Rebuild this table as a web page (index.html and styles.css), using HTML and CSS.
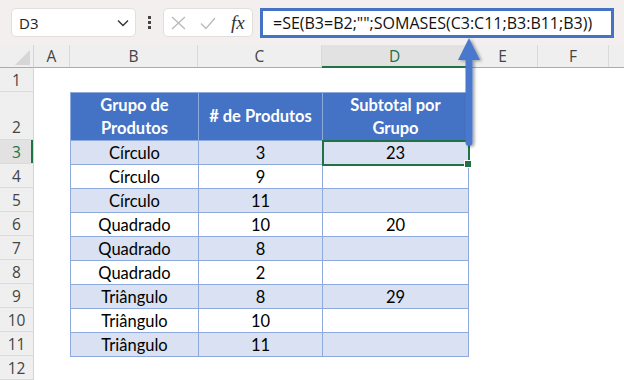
FILE: index.html
```html
<!DOCTYPE html>
<html lang="pt-br">
<head>
    <meta charset="UTF-8">
    <title>Subtotal por Grupo</title>
    <link rel="stylesheet" href="styles.css">
</head>
<body>
    <!-- Barra de fórmulas -->
    <div class="toolbar">
        <div class="namebox">
            <span>D3</span>
            <svg class="chevron" width="12" height="8" viewBox="0 0 12 8"><path d="M1 1.5 L6 6.5 L11 1.5" fill="none" stroke="#333" stroke-width="1.4"/></svg>
        </div>
        <div class="dots"><i></i><i></i><i></i></div>
        <div class="fxbox">
            <svg width="18" height="16" viewBox="0 0 18 16"><path d="M2 2 L15 14 M15 2 L2 14" stroke="#b9b9b9" stroke-width="1.3"/></svg>
            <svg width="18" height="16" viewBox="0 0 18 16"><path d="M2 8.5 L7 13.5 L16 3" fill="none" stroke="#b9b9b9" stroke-width="1.3"/></svg>
            <span class="fx">fx</span>
        </div>
        <div class="formula">=SE(B3=B2;"";SOMASES(C3:C11;B3:B11;B3))</div>
    </div>

    <div class="sheet">
        <div class="corner"><span class="tri"></span></div>
        <div class="colheads">
            <div class="ch w-a">A</div>
            <div class="ch w-b">B</div>
            <div class="ch w-c">C</div>
            <div class="ch w-d sel">D</div>
            <div class="ch w-e">E</div>
            <div class="ch w-f">F</div>
            <div class="ch w-g"></div>
        </div>
        <div class="rowheads">
            <div class="rh">1</div>
            <div class="rh tall">2</div>
            <div class="rh sel">3</div>
            <div class="rh">4</div>
            <div class="rh">5</div>
            <div class="rh">6</div>
            <div class="rh">7</div>
            <div class="rh">8</div>
            <div class="rh">9</div>
            <div class="rh">10</div>
            <div class="rh">11</div>
            <div class="rh">12</div>
        </div>
        <div class="cells">
            <table class="dados">
                <colgroup>
                    <col class="c-b"><col class="c-c"><col class="c-d">
                </colgroup>
                <thead>
                    <tr>
                        <th>Grupo de<br>Produtos</th>
                        <th># de Produtos</th>
                        <th>Subtotal por<br>Grupo</th>
                    </tr>
                </thead>
                <tbody>
                    <tr><td>Círculo</td><td>3</td><td class="ativa">23</td></tr>
                    <tr><td>Círculo</td><td>9</td><td></td></tr>
                    <tr><td>Círculo</td><td>11</td><td></td></tr>
                    <tr><td>Quadrado</td><td>10</td><td>20</td></tr>
                    <tr><td>Quadrado</td><td>8</td><td></td></tr>
                    <tr><td>Quadrado</td><td>2</td><td></td></tr>
                    <tr><td>Triângulo</td><td>8</td><td>29</td></tr>
                    <tr><td>Triângulo</td><td>10</td><td></td></tr>
                    <tr><td>Triângulo</td><td>11</td><td></td></tr>
                </tbody>
            </table>
        </div>
    </div>

    <!-- seta apontando da célula para a fórmula -->
    <svg class="seta" width="30" height="116" viewBox="0 0 30 116">
        <defs>
            <filter id="sombra" x="-50%" y="-10%" width="200%" height="130%">
                <feDropShadow dx="2" dy="1" stdDeviation="1.5" flood-color="#000" flood-opacity="0.35"/>
            </filter>
        </defs>
        <g filter="url(#sombra)">
            <path d="M15 2 L26 24 L18.5 24 L18.5 106 Q18.5 110 15 110 Q11.5 110 11.5 106 L11.5 24 L4 24 Z" fill="#4a78cc"/>
        </g>
    </svg>
</body>
</html>
```

FILE: styles.css
```css
* {
    margin: 0;
    padding: 0;
    box-sizing: border-box;
}

body {
    width: 624px;
    height: 380px;
    overflow: hidden;
    background: #fff;
    font-family: 'Open Sans', sans-serif;
    position: relative;
}

/* Barra superior */
.toolbar {
    height: 45px;
    background: #f3efef;
    display: flex;
    align-items: center;
    padding: 0 10px 0 11px;
}

.namebox {
    width: 125px;
    height: 29px;
    background: #fff;
    border: 1px solid #e2dede;
    border-radius: 5px;
    display: flex;
    align-items: center;
    justify-content: space-between;
    padding: 0 6px 0 7px;
    font-size: 15px;
    color: #222;
}

.dots {
    width: 27px;
    display: flex;
    flex-direction: column;
    align-items: center;
    gap: 2px;
}

.dots i {
    display: block;
    width: 3px;
    height: 3px;
    background: #444;
}

.fxbox {
    width: 90px;
    height: 29px;
    background: #fff;
    border: 1px solid #e2dede;
    border-radius: 5px;
    display: flex;
    align-items: center;
    gap: 11px;
    padding-left: 6px;
}

.fx {
    font-family: 'Liberation Serif', serif;
    font-style: italic;
    font-size: 19px;
    color: #333;
    margin-left: 3px;
}

.formula {
    margin-left: 7px;
    width: 354px;
    height: 30px;
    background: #fff;
    border: 3px solid #4472c4;
    padding-left: 10px;
    font-size: 16px;
    line-height: 24px;
    color: #111;
    white-space: nowrap;
}

/* Planilha */
.sheet {
    display: grid;
    grid-template-columns: 34px 1fr;
    grid-template-rows: 23px 1fr;
}

.corner {
    background: #efefef;
    border-right: 1px solid #d4d4d4;
    border-bottom: 1px solid #ababab;
    position: relative;
}

.tri {
    position: absolute;
    right: 3px;
    bottom: 2px;
    width: 0;
    height: 0;
    border-left: 15px solid transparent;
    border-bottom: 15px solid #d6d6d6;
}

.colheads {
    display: flex;
    background: #efefef;
    border-bottom: 1px solid #ababab;
}

.ch {
    height: 22px;
    font-size: 15.5px;
    line-height: 22px;
    text-align: center;
    color: #444;
    border-right: 1px solid #dadada;
}

.ch.sel {
    background: #e2e2e2;
    color: #217346;
    border-bottom: 2px solid #217346;
    height: 23px;
}

.w-a { width: 36px; }
.w-b { width: 128px; }
.w-c { width: 124px; }
.w-d { width: 146px; }
.w-e { width: 70px; }
.w-f { width: 71px; }
.w-g { flex: 1; border-right: none; }

.rowheads {
    background: #efefef;
    border-right: 1px solid #d4d4d4;
}

.rh {
    height: 24px;
    font-size: 15.5px;
    line-height: 24px;
    text-align: center;
    color: #444;
    border-bottom: 1px solid #dadada;
}

.rh.tall {
    height: 48px;
    line-height: 70px;
}

.rh.sel {
    background: #e2e2e2;
    color: #217346;
    box-shadow: inset -2px 0 0 #217346;
}

.cells {
    padding: 24px 0 0 36px;
}

/* Tabela de dados */
.dados {
    border-collapse: collapse;
    table-layout: fixed;
    font-family: 'Lato', sans-serif;
    font-size: 16.5px;
    color: #000;
}

.c-b { width: 128px; }
.c-c { width: 124px; }
.c-d { width: 146px; }

.dados th,
.dados td {
    border: 1px solid #8ea9db;
    text-align: center;
    padding: 0;
}

.dados th {
    height: 48px;
    background: #4472c4;
    color: #fff;
    font-weight: bold;
    line-height: 23px;
}

.dados td {
    height: 24px;
    line-height: 22px;
}

.dados tbody tr:nth-child(odd) td {
    background: #d9e1f2;
}

.dados td.ativa {
    outline: 2px solid #217346;
    outline-offset: -1px;
    position: relative;
}

.dados td.ativa::after {
    content: "";
    position: absolute;
    right: -4px;
    bottom: -4px;
    width: 6px;
    height: 6px;
    background: #217346;
    border: 1px solid #fff;
}

.seta {
    position: absolute;
    left: 454px;
    top: 36px;
}
```
